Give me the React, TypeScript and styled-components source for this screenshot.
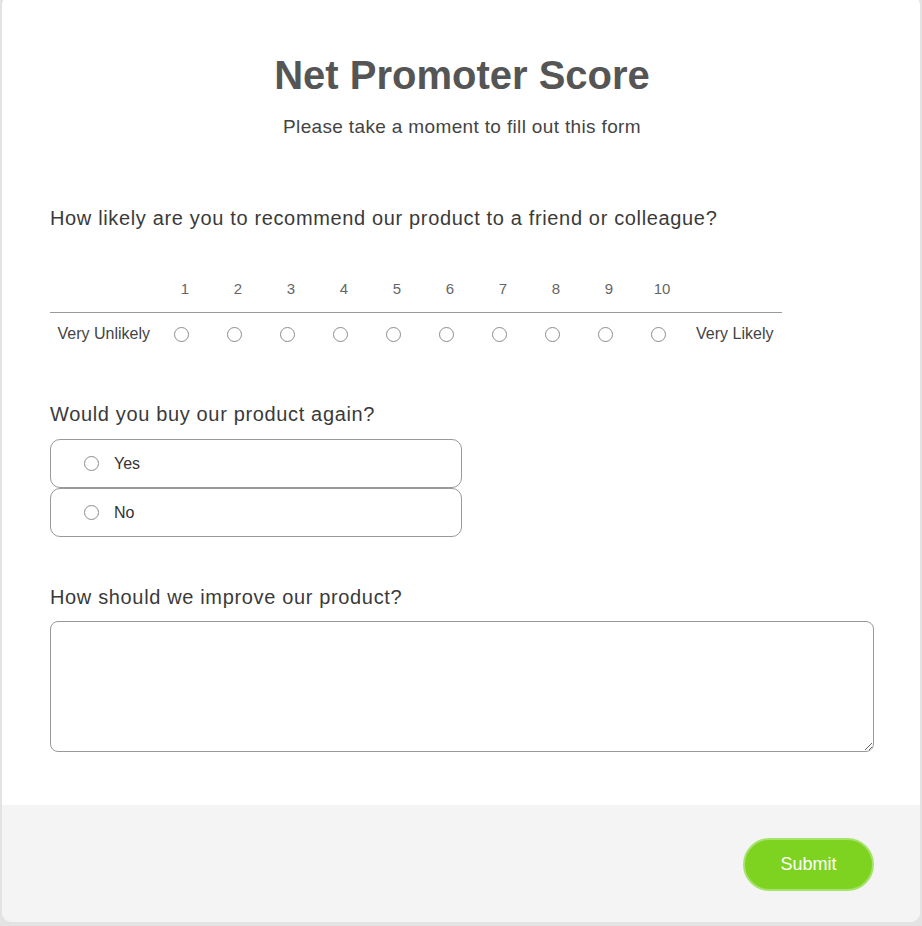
import styled, { createGlobalStyle } from "styled-components";

const GlobalStyle = createGlobalStyle`
  html, body {
    margin: 0;
    padding: 0;
    background: #e3e3e3;
  }
  body {
    font-family: "Liberation Sans", Arial, Helvetica, sans-serif;
  }
`;

const scale = [1, 2, 3, 4, 5, 6, 7, 8, 9, 10];

const App = () => {
  return (
    <>
      <GlobalStyle />
      <Card>
        <Body>
          <Header>
            <Title>Net Promoter Score</Title>
            <Subtitle>Please take a moment to fill out this form</Subtitle>
          </Header>

          <Question>How likely are you to recommend our product to a friend or colleague?</Question>
          <ScaleGrid>
            <HeadCell />
            {scale.map((n) => (
              <NumberCell key={n}>{n}</NumberCell>
            ))}
            <HeadCell />
            <EdgeLabel>Very Unlikely</EdgeLabel>
            {scale.map((n) => (
              <RadioCell key={n}>
                <Radio type="radio" name="nps" value={n} aria-label={String(n)} />
              </RadioCell>
            ))}
            <EdgeLabel>Very Likely</EdgeLabel>
          </ScaleGrid>

          <Question $top={47}>Would you buy our product again?</Question>
          <Options>
            {["Yes", "No"].map((opt) => (
              <Option key={opt}>
                <Radio type="radio" name="again" value={opt} />
                <span>{opt}</span>
              </Option>
            ))}
          </Options>

          <Question $top={48}>How should we improve our product?</Question>
          <TextBox />
        </Body>

        <Footer>
          <SubmitButton type="button">Submit</SubmitButton>
        </Footer>
      </Card>
    </>
  );
};

export default App;

const Card = styled.div`
  margin: -5px 2px 0;
  background: #fff;
  border-radius: 10px;
  overflow: hidden;
  height: 927px;
  display: flex;
  flex-direction: column;
`;

const Body = styled.div`
  flex: 1;
  padding: 57px 46px 0 48px;
`;

const Header = styled.div`
  text-align: center;
  margin-bottom: 67px;
`;

const Title = styled.h1`
  margin: 0;
  font-size: 40px;
  line-height: 46px;
  font-weight: 700;
  color: #555;
`;

const Subtitle = styled.p`
  margin: 17px 0 0;
  font-size: 19px;
  line-height: 24px;
  letter-spacing: 0.35px;
  color: #444;
`;

const Question = styled.div<{ $top?: number }>`
  margin-top: ${(p) => p.$top ?? 0}px;
  font-size: 20px;
  line-height: 24px;
  letter-spacing: 0.65px;
  color: #3a3a3a;
`;

const ScaleGrid = styled.div`
  margin-top: 44px;
  width: 732px;
  display: grid;
  grid-template-columns: 104.5px repeat(10, 53px) 97.5px;
`;

const HeadCell = styled.div`
  border-bottom: 1px solid #9a9a9a;
`;

const NumberCell = styled.div`
  border-bottom: 1px solid #9a9a9a;
  padding: 0 0 8px 8px;
  line-height: 30px;
  text-align: center;
  font-size: 15px;
  color: #666;
`;

const EdgeLabel = styled.div`
  height: 42px;
  display: flex;
  align-items: center;
  justify-content: center;
  padding-left: 3px;
  font-size: 16px;
  color: #444;
`;

const RadioCell = styled.div`
  height: 42px;
  display: flex;
  align-items: center;
  justify-content: center;
`;

const Radio = styled.input`
  appearance: none;
  margin: 0;
  width: 15px;
  height: 15px;
  border: 1px solid #8c8c8c;
  border-radius: 50%;
  background: #fff;
  flex-shrink: 0;
`;

const Options = styled.div`
  margin-top: 13px;
  width: 412px;
  display: flex;
  flex-direction: column;
`;

const Option = styled.label`
  box-sizing: border-box;
  height: 49px;
  display: flex;
  align-items: center;
  gap: 15px;
  padding-left: 33px;
  border: 1px solid #999;
  border-radius: 10px;
  font-size: 16px;
  color: #333;
`;

const TextBox = styled.textarea`
  display: block;
  box-sizing: border-box;
  margin-top: 12px;
  width: 100%;
  height: 131px;
  border: 1px solid #999;
  border-radius: 8px;
  font-family: inherit;
  font-size: 16px;
  padding: 8px 10px;
  outline: none;
`;

const Footer = styled.div`
  flex-shrink: 0;
  background: #f4f4f4;
  height: 117px;
  box-sizing: border-box;
  display: flex;
  justify-content: flex-end;
  align-items: flex-start;
  padding: 33px 46px 0 0;
`;

const SubmitButton = styled.button`
  width: 131px;
  height: 53px;
  border-radius: 27px;
  border: 2px solid #a6e36b;
  background: #7ed321;
  color: #fff;
  font-family: inherit;
  font-size: 18px;
  cursor: pointer;
`;
